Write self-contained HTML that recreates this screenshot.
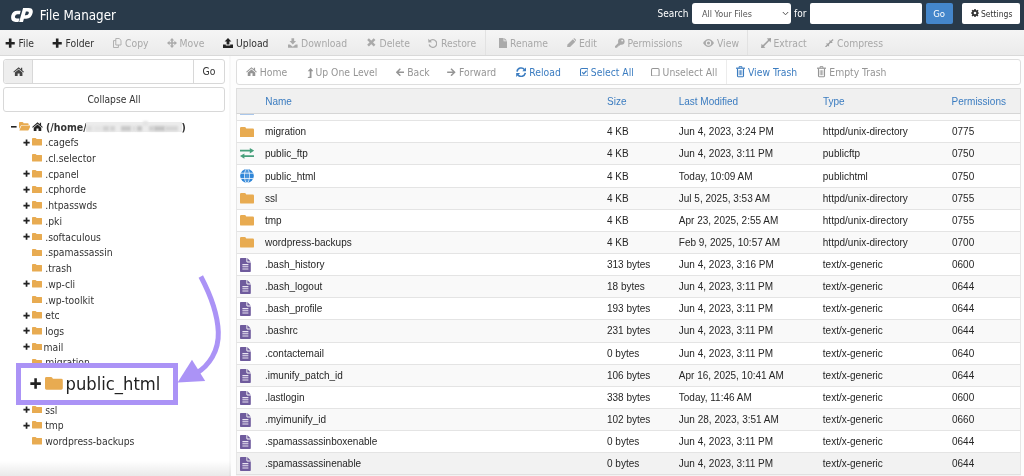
<!DOCTYPE html>
<html lang="en"><head><meta charset="utf-8"><title>File Manager</title>
<style>
*{box-sizing:border-box;margin:0;padding:0}
html,body{width:1024px;height:476px;overflow:hidden;background:#fff}
body{opacity:0.999}
body{position:relative;font-family:"DejaVu Sans Condensed","Liberation Sans",sans-serif;font-size:10.3px;color:#333}
.abs{position:absolute}
#hdr{left:0;top:0;width:1024px;height:30px;background:#293a4a}
#hdr .t{color:#fff;white-space:nowrap}
#tb{left:0;top:30px;width:1024px;height:25.6px;background:linear-gradient(#f5f5f5,#ebebeb);border-bottom:1px solid #d9d9d9}
.ti{position:absolute;top:0.8px;height:25px;line-height:25px;white-space:nowrap;font-size:10.3px;color:#333}
.ti.d{color:#a8a8a8}
.ti svg{position:absolute;top:0;margin-top:-1.2px}
.sep{position:absolute;top:0;width:1px;height:25px;background:#e2e2e2}
#left{left:0;top:56px;width:230px;height:420px;background:#fff}
#right{left:231px;top:56px;width:793px;height:420px;background:#fdfdfd}
.box{position:absolute;background:#fff;border:1px solid #d8d8d8;border-radius:3px}
.tr{position:absolute;left:0;height:16px;line-height:16px;white-space:nowrap;font-size:10.3px;color:#333}
.tr span{position:absolute;left:45.2px;top:0}
.tr svg{position:absolute}
.ai{position:absolute;top:0.4px;height:25px;line-height:25px;white-space:nowrap;font-size:10.3px;color:#959595}
.ai.b{color:#3b7cc0}
.ai svg{position:absolute;margin-top:-0.4px}
#th{left:235.5px;top:88px;width:785.5px;height:26px;background:#f0f0f0;border:1px solid #dedede;border-bottom:1px solid #d6d6d6}
#th span{position:absolute;top:0.6px;line-height:24px;font-family:"Liberation Sans",sans-serif;font-size:10px;color:#3b7cc0;white-space:nowrap}
.row{position:absolute;left:235.5px;width:785.5px;height:23px;border-top:1px solid #e4e4e4;border-left:1px solid #e6e6e6;border-right:1px solid #e6e6e6;background:#fff;font-family:"Liberation Sans",sans-serif;font-size:10px;color:#262626}
.row.o{background:#f9f9f9}
.row.l{background:#f2f2f2}
.row span{position:absolute;top:0.1px;line-height:22px;white-space:nowrap}
.row svg{position:absolute}
</style></head>
<body>
<div id="hdr" class="abs">
<svg style="left:10.9px;top:8.2px" width="22" height="14" viewBox="0 0 22 14" class="abs"><path d="M9.7 2.7H6.2Q1.5 2.7 0.3 7.6Q-0.8 13.9 4.6 13.9H7.5L8.5 10.4H5.7Q3.5 10.4 4 8.3Q4.5 6.2 6.5 6.2H8.8Z" fill="#fff"/><path d="M12.1 0H17.6Q22.7 0 21.6 5.1Q20.4 10.7 15.2 10.7H12.5L13.4 7.3H15Q17.3 7.3 17.8 5.2Q18.2 3.4 16.2 3.4H14.9L12 13.9H8.1Z" fill="#fff"/></svg>
<div class="abs t" style="left:39.8px;top:8.2px;line-height:16px;font-size:13.3px">File Manager</div>
<div class="abs t" style="left:657.5px;top:5.7px;line-height:16px;font-size:10px">Search</div>
<div class="abs" style="left:692px;top:3px;width:99px;height:21px;background:#fff;border-radius:3px"></div>
<div class="abs" style="left:702px;top:6px;line-height:16px;font-size:9px;color:#555;white-space:nowrap">All Your Files</div>
<svg style="left:782px;top:10.5px" width="7" height="5" viewBox="0 0 7 5" class="abs"><path d="M0.8 1L3.5 3.8L6.2 1" stroke="#555" stroke-width="1" fill="none"/></svg>
<div class="abs t" style="left:794px;top:5.7px;line-height:16px;font-size:10px">for</div>
<div class="abs" style="left:810px;top:3px;width:112px;height:21px;background:#fff;border-radius:2px"></div>
<div class="abs" style="left:925.6px;top:3px;width:27px;height:21.2px;background:#4486cb;border-radius:2px;color:#fff;font-size:9.5px;line-height:21px;text-align:center">Go</div>
<div class="abs" style="left:962.2px;top:3px;width:58.2px;height:21.2px;background:#fff;border-radius:2px"></div>
<svg style="left:970.5px;top:9.3px" width="8" height="8" viewBox="0 0 16 16" class="abs"><path d="M6.6 0H9.4L9.8 2.2L11.3 2.9L13.2 1.6L15 3.6L13.6 5.3L14.1 6.8L16 7.2V9.2L14.1 9.6L13.5 11L14.8 12.8L12.8 14.8L11 13.5L9.7 14L9.3 16H6.7L6.3 14L5 13.5L3.2 14.8L1.2 12.8L2.5 11L1.9 9.6L0 9.2V6.8L2 6.4L2.5 5.1L1.2 3.3L3.2 1.3L5 2.6L6.2 2.1Z" fill="#333"/><circle cx="8" cy="8" r="2.6" fill="#fff"/></svg>
<div class="abs" style="left:981px;top:5.5px;line-height:16px;font-size:8.5px;color:#333;white-space:nowrap">Settings</div>
</div>
<div id="tb" class="abs">
<div class="ti" style="left:0;width:0"><svg style="left:5px;top:8px" width="10.4" height="10.4" viewBox="0 0 10 10" ><path d="M5 0.6V9.4M0.6 5H9.4" stroke="#222" stroke-width="2.5" fill="none"/></svg><span style="position:absolute;left:18.5px;top:0">File</span></div>
<div class="ti" style="left:0;width:0"><svg style="left:52px;top:8px" width="10.4" height="10.4" viewBox="0 0 10 10" ><path d="M5 0.6V9.4M0.6 5H9.4" stroke="#222" stroke-width="2.5" fill="none"/></svg><span style="position:absolute;left:65.5px;top:0">Folder</span></div>
<div class="ti d" style="left:0;width:0"><svg style="left:113px;top:8px" width="8.5" height="10" viewBox="0 0 8.5 10" ><path d="M2.8 0.5H6.2L8 2.3V7H2.8Z" fill="none" stroke="#aaaaaa" stroke-width="0.9"/><path d="M2.8 2.6H0.5V9.5H5.4V7" fill="none" stroke="#aaaaaa" stroke-width="0.9"/></svg><span style="position:absolute;left:125px;top:0">Copy</span></div>
<div class="ti d" style="left:0;width:0"><svg style="left:166.5px;top:8px" width="10" height="10" viewBox="0 0 10 10" ><path d="M5 0L7.2 2.6H5.8V4.2H7.4V2.8L10 5L7.4 7.2V5.8H5.8V7.4H7.2L5 10L2.8 7.4H4.2V5.8H2.6V7.2L0 5L2.6 2.8V4.2H4.2V2.6H2.8Z" fill="#aaaaaa"/></svg><span style="position:absolute;left:179.5px;top:0">Move</span></div>
<div class="ti" style="left:0;width:0"><svg style="left:222.5px;top:8px" width="10" height="10" viewBox="0 0 10 10" ><path d="M5 0L8.4 3.6H6.4V6.6H3.6V3.6H1.6Z" fill="#222"/><path d="M0 6.6H2.8V7.6H7.2V6.6H10V10H0Z" fill="#222"/></svg><span style="position:absolute;left:236px;top:0">Upload</span></div>
<div class="ti d" style="left:0;width:0"><svg style="left:288px;top:8px" width="9.6" height="10" viewBox="0 0 10 10" ><path d="M3.6 0H6.4V3H8.4L5 6.6L1.6 3H3.6Z" fill="#aaaaaa"/><path d="M0 6.6H2L5 9L8 6.6H10V10H0Z" fill="#aaaaaa"/></svg><span style="position:absolute;left:301px;top:0">Download</span></div>
<div class="ti d" style="left:0;width:0"><svg style="left:367px;top:8.7px" width="8.6" height="8.6" viewBox="0 0 10 10" ><path d="M1.2 1.2L8.8 8.8M8.8 1.2L1.2 8.8" stroke="#aaaaaa" stroke-width="2.9" fill="none"/></svg><span style="position:absolute;left:379.5px;top:0">Delete</span></div>
<div class="ti d" style="left:0;width:0"><svg style="left:427.5px;top:8px" width="9.6" height="10" viewBox="0 0 10 10" ><path d="M1.9 3.1A4 4 0 1 1 1.2 6.6" stroke="#aaaaaa" stroke-width="1.3" fill="none"/><path d="M0.2 0.6L0.4 4.6L4.2 4.2Z" fill="#aaaaaa"/></svg><span style="position:absolute;left:441px;top:0">Restore</span></div>
<div class="sep" style="left:484.7px"></div>
<div class="ti d" style="left:0;width:0"><svg style="left:498.5px;top:8px" width="8" height="10" viewBox="0 0 8 10" ><path d="M0 0H4.6V3.2H8V10H0Z" fill="#aaaaaa"/><path d="M5.3 0L8 2.6H5.3Z" fill="#aaaaaa"/></svg><span style="position:absolute;left:510px;top:0">Rename</span></div>
<div class="ti d" style="left:0;width:0"><svg style="left:566.5px;top:8px" width="9.6" height="9.6" viewBox="0 0 10 10" ><path d="M0 10L0.5 6.9L6.1 1.3L8.7 3.9L3.1 9.5Z" fill="#aaaaaa"/><path d="M6.9 0.5Q7.5 -0.1 8.1 0.5L9.5 1.9Q10.1 2.5 9.5 3.1L9.3 3.3L6.7 0.7Z" fill="#aaaaaa"/></svg><span style="position:absolute;left:579px;top:0">Edit</span></div>
<div class="ti d" style="left:0;width:0"><svg style="left:615px;top:8px" width="9.6" height="10" viewBox="0 0 10 10" ><circle cx="6.6" cy="3.4" r="3.4" fill="#aaaaaa"/><path d="M4.4 4L0 8.4V10H2.4V8.9H3.5V7.8H4.6L6.4 6Z" fill="#aaaaaa"/><circle cx="7.5" cy="2.5" r="1" fill="#efefef"/></svg><span style="position:absolute;left:627.5px;top:0">Permissions</span></div>
<div class="ti d" style="left:0;width:0"><svg style="left:703px;top:9px" width="11" height="8" viewBox="0 0 11 8" ><path d="M0 4Q2.6 0 5.5 0Q8.4 0 11 4Q8.4 8 5.5 8Q2.6 8 0 4Z" fill="#aaaaaa"/><circle cx="5.5" cy="4" r="2.7" fill="#f0f0f0"/><circle cx="5.5" cy="4" r="1.6" fill="#aaaaaa"/></svg><span style="position:absolute;left:717px;top:0">View</span></div>
<div class="sep" style="left:747px"></div>
<div class="ti d" style="left:0;width:0"><svg style="left:761px;top:8.2px" width="10.2" height="10.2" viewBox="0 0 10 10" ><path d="M2 8L8 2" stroke="#a2a2a2" stroke-width="1.5" fill="none"/><path d="M10 0L5.7 0.5L9.5 4.3Z" fill="#a2a2a2"/><path d="M0 10L0.5 5.7L4.3 9.5Z" fill="#a2a2a2"/></svg><span style="position:absolute;left:773.5px;top:0">Extract</span></div>
<div class="ti d" style="left:0;width:0"><svg style="left:825px;top:9px" width="8.6" height="8.6" viewBox="0 0 10 10" ><path d="M0.6 9.4L9.4 0.6" stroke="#a2a2a2" stroke-width="1.5" fill="none"/><path d="M5.3 4.7V0.9L9.1 4.7Z" fill="#a2a2a2"/><path d="M4.7 5.3V9.1L0.9 5.3Z" fill="#a2a2a2"/></svg><span style="position:absolute;left:837px;top:0">Compress</span></div>
</div>
<div id="left" class="abs"></div>
<div class="abs" style="left:228.5px;top:56px;width:2.5px;height:420px;background:#f8f8f8"></div>
<div class="box" style="left:3px;top:59px;width:222px;height:25px"></div>
<div class="abs" style="left:4px;top:60px;width:28.5px;height:23px;background:#eee;border-right:1px solid #d8d8d8;border-radius:3px 0 0 3px"></div>
<svg style="left:12.9px;top:66.8px" width="11.3" height="9.2" viewBox="0 0 12 10" class="abs"><path d="M6 0.3L0.2 5.2L0.9 6L6 1.8L11.1 6L11.8 5.2L9.9 3.6V0.9H8.5V2.4Z" fill="#444"/><path d="M6 2.7L1.9 6.1V10H4.9V7H7.1V10H10.1V6.1Z" fill="#444"/></svg>
<div class="abs" style="left:193px;top:60px;width:1px;height:23px;background:#d8d8d8"></div>
<div class="abs" style="left:194px;top:60px;width:30px;height:23px;line-height:23.2px;text-align:center;font-size:10.3px;color:#333">Go</div>
<div class="box" style="left:3px;top:87.3px;width:222px;height:24.4px;line-height:24.2px;text-align:center;font-size:10.2px;color:#333">Collapse All</div>
<div class="tr" style="top:118.6px"><svg style="left:11.2px;top:7.4px" width="5.6" height="1.6" viewBox="0 0 5.6 1.6" ><rect width="5.6" height="1.6" fill="#222"/></svg><svg style="left:18.7px;top:3.6px" width="11.6" height="8.6" viewBox="0 0 14 10" preserveAspectRatio="none"><path d="M0 1Q0 0 1 0H4Q4.9 0 5.2 0.7L5.5 1.4H10.6Q11.6 1.4 11.6 2.4V3.4H3.6Q2.6 3.4 2.1 4.3L0 8.2Z" fill="#e8ab51"/><path d="M3.3 4.2H13.4Q14.3 4.2 13.8 5L11.6 9.3Q11.2 10 10.3 10H0.4L2.6 4.8Q2.8 4.2 3.3 4.2Z" fill="#e8ab51"/></svg><svg style="left:32.2px;top:3.0px" width="11" height="9.4" viewBox="0 0 12 10" preserveAspectRatio="none"><path d="M6 0.3L0.2 5.2L0.9 6L6 1.8L11.1 6L11.8 5.2L9.9 3.6V0.9H8.5V2.4Z" fill="#222"/><path d="M6 2.7L1.9 6.1V10H4.9V7H7.1V10H10.1V6.1Z" fill="#222"/></svg><span style="left:46px;font-weight:bold;font-size:10.5px">(/home/</span><span style="left:181.6px;font-weight:bold;font-size:10.5px">)</span></div>
<div class="abs" style="left:86px;top:121.5px;width:95.5px;height:10.2px;background:#ececec;filter:blur(0.7px)"></div>
<div class="abs" style="left:86.9px;top:125.6px;width:5.5px;height:5px;background:#dcdcdc;filter:blur(0.9px)"></div>
<div class="abs" style="left:93.9px;top:125.6px;width:7.8px;height:5px;background:#e4e4e4;filter:blur(0.9px)"></div>
<div class="abs" style="left:103.3px;top:125.6px;width:5.5px;height:5px;background:#d2d2d2;filter:blur(0.9px)"></div>
<div class="abs" style="left:110.3px;top:125.6px;width:4.7px;height:5px;background:#d4d4d4;filter:blur(0.9px)"></div>
<div class="abs" style="left:120.5px;top:125.6px;width:10.2px;height:5px;background:#c9c9c9;filter:blur(0.9px)"></div>
<div class="abs" style="left:132.2px;top:125.6px;width:3.4px;height:5px;background:#dedede;filter:blur(0.9px)"></div>
<div class="abs" style="left:136.9px;top:125.6px;width:4.7px;height:5px;background:#c6c6c6;filter:blur(0.9px)"></div>
<div class="abs" style="left:149.4px;top:125.6px;width:4.7px;height:5px;background:#d2d2d2;filter:blur(0.9px)"></div>
<div class="abs" style="left:154.1px;top:125.6px;width:10.9px;height:5px;background:#c4c4c4;filter:blur(0.9px)"></div>
<div class="abs" style="left:165.0px;top:125.6px;width:12.5px;height:5px;background:#d6d6d6;filter:blur(0.9px)"></div>
<div class="abs" style="left:143.1px;top:120.8px;width:4.6px;height:5px;background:#e4e4e4;filter:blur(0.8px)"></div>
<div class="tr" style="top:134.30px"><svg style="left:22.9px;top:4.5px" width="7.1" height="7.1" viewBox="0 0 10 10" ><path d="M5 0.6V9.4M0.6 5H9.4" stroke="#222" stroke-width="2.4" fill="none"/></svg><svg style="left:32px;top:4.2px" width="10.2" height="7.6" viewBox="0 0 14 10.5" preserveAspectRatio="none"><path d="M0 1.2Q0 0 1.2 0H4.6Q5.6 0 5.9 0.8L6.2 1.5H12.8Q14 1.5 14 2.7V9.3Q14 10.5 12.8 10.5H1.2Q0 10.5 0 9.3Z" fill="#e8ab51"/></svg><span>.cagefs</span></div>
<div class="tr" style="top:150.02px"><svg style="left:32px;top:4.2px" width="10.2" height="7.6" viewBox="0 0 14 10.5" preserveAspectRatio="none"><path d="M0 1.2Q0 0 1.2 0H4.6Q5.6 0 5.9 0.8L6.2 1.5H12.8Q14 1.5 14 2.7V9.3Q14 10.5 12.8 10.5H1.2Q0 10.5 0 9.3Z" fill="#e8ab51"/></svg><span>.cl.selector</span></div>
<div class="tr" style="top:165.74px"><svg style="left:22.9px;top:4.5px" width="7.1" height="7.1" viewBox="0 0 10 10" ><path d="M5 0.6V9.4M0.6 5H9.4" stroke="#222" stroke-width="2.4" fill="none"/></svg><svg style="left:32px;top:4.2px" width="10.2" height="7.6" viewBox="0 0 14 10.5" preserveAspectRatio="none"><path d="M0 1.2Q0 0 1.2 0H4.6Q5.6 0 5.9 0.8L6.2 1.5H12.8Q14 1.5 14 2.7V9.3Q14 10.5 12.8 10.5H1.2Q0 10.5 0 9.3Z" fill="#e8ab51"/></svg><span>.cpanel</span></div>
<div class="tr" style="top:181.46px"><svg style="left:22.9px;top:4.5px" width="7.1" height="7.1" viewBox="0 0 10 10" ><path d="M5 0.6V9.4M0.6 5H9.4" stroke="#222" stroke-width="2.4" fill="none"/></svg><svg style="left:32px;top:4.2px" width="10.2" height="7.6" viewBox="0 0 14 10.5" preserveAspectRatio="none"><path d="M0 1.2Q0 0 1.2 0H4.6Q5.6 0 5.9 0.8L6.2 1.5H12.8Q14 1.5 14 2.7V9.3Q14 10.5 12.8 10.5H1.2Q0 10.5 0 9.3Z" fill="#e8ab51"/></svg><span>.cphorde</span></div>
<div class="tr" style="top:197.18px"><svg style="left:22.9px;top:4.5px" width="7.1" height="7.1" viewBox="0 0 10 10" ><path d="M5 0.6V9.4M0.6 5H9.4" stroke="#222" stroke-width="2.4" fill="none"/></svg><svg style="left:32px;top:4.2px" width="10.2" height="7.6" viewBox="0 0 14 10.5" preserveAspectRatio="none"><path d="M0 1.2Q0 0 1.2 0H4.6Q5.6 0 5.9 0.8L6.2 1.5H12.8Q14 1.5 14 2.7V9.3Q14 10.5 12.8 10.5H1.2Q0 10.5 0 9.3Z" fill="#e8ab51"/></svg><span>.htpasswds</span></div>
<div class="tr" style="top:212.90px"><svg style="left:22.9px;top:4.5px" width="7.1" height="7.1" viewBox="0 0 10 10" ><path d="M5 0.6V9.4M0.6 5H9.4" stroke="#222" stroke-width="2.4" fill="none"/></svg><svg style="left:32px;top:4.2px" width="10.2" height="7.6" viewBox="0 0 14 10.5" preserveAspectRatio="none"><path d="M0 1.2Q0 0 1.2 0H4.6Q5.6 0 5.9 0.8L6.2 1.5H12.8Q14 1.5 14 2.7V9.3Q14 10.5 12.8 10.5H1.2Q0 10.5 0 9.3Z" fill="#e8ab51"/></svg><span>.pki</span></div>
<div class="tr" style="top:228.62px"><svg style="left:22.9px;top:4.5px" width="7.1" height="7.1" viewBox="0 0 10 10" ><path d="M5 0.6V9.4M0.6 5H9.4" stroke="#222" stroke-width="2.4" fill="none"/></svg><svg style="left:32px;top:4.2px" width="10.2" height="7.6" viewBox="0 0 14 10.5" preserveAspectRatio="none"><path d="M0 1.2Q0 0 1.2 0H4.6Q5.6 0 5.9 0.8L6.2 1.5H12.8Q14 1.5 14 2.7V9.3Q14 10.5 12.8 10.5H1.2Q0 10.5 0 9.3Z" fill="#e8ab51"/></svg><span>.softaculous</span></div>
<div class="tr" style="top:244.34px"><svg style="left:32px;top:4.2px" width="10.2" height="7.6" viewBox="0 0 14 10.5" preserveAspectRatio="none"><path d="M0 1.2Q0 0 1.2 0H4.6Q5.6 0 5.9 0.8L6.2 1.5H12.8Q14 1.5 14 2.7V9.3Q14 10.5 12.8 10.5H1.2Q0 10.5 0 9.3Z" fill="#e8ab51"/></svg><span>.spamassassin</span></div>
<div class="tr" style="top:260.06px"><svg style="left:32px;top:4.2px" width="10.2" height="7.6" viewBox="0 0 14 10.5" preserveAspectRatio="none"><path d="M0 1.2Q0 0 1.2 0H4.6Q5.6 0 5.9 0.8L6.2 1.5H12.8Q14 1.5 14 2.7V9.3Q14 10.5 12.8 10.5H1.2Q0 10.5 0 9.3Z" fill="#e8ab51"/></svg><span>.trash</span></div>
<div class="tr" style="top:275.78px"><svg style="left:22.9px;top:4.5px" width="7.1" height="7.1" viewBox="0 0 10 10" ><path d="M5 0.6V9.4M0.6 5H9.4" stroke="#222" stroke-width="2.4" fill="none"/></svg><svg style="left:32px;top:4.2px" width="10.2" height="7.6" viewBox="0 0 14 10.5" preserveAspectRatio="none"><path d="M0 1.2Q0 0 1.2 0H4.6Q5.6 0 5.9 0.8L6.2 1.5H12.8Q14 1.5 14 2.7V9.3Q14 10.5 12.8 10.5H1.2Q0 10.5 0 9.3Z" fill="#e8ab51"/></svg><span>.wp-cli</span></div>
<div class="tr" style="top:291.50px"><svg style="left:32px;top:4.2px" width="10.2" height="7.6" viewBox="0 0 14 10.5" preserveAspectRatio="none"><path d="M0 1.2Q0 0 1.2 0H4.6Q5.6 0 5.9 0.8L6.2 1.5H12.8Q14 1.5 14 2.7V9.3Q14 10.5 12.8 10.5H1.2Q0 10.5 0 9.3Z" fill="#e8ab51"/></svg><span>.wp-toolkit</span></div>
<div class="tr" style="top:307.22px"><svg style="left:22.9px;top:4.5px" width="7.1" height="7.1" viewBox="0 0 10 10" ><path d="M5 0.6V9.4M0.6 5H9.4" stroke="#222" stroke-width="2.4" fill="none"/></svg><svg style="left:32px;top:4.2px" width="10.2" height="7.6" viewBox="0 0 14 10.5" preserveAspectRatio="none"><path d="M0 1.2Q0 0 1.2 0H4.6Q5.6 0 5.9 0.8L6.2 1.5H12.8Q14 1.5 14 2.7V9.3Q14 10.5 12.8 10.5H1.2Q0 10.5 0 9.3Z" fill="#e8ab51"/></svg><span>etc</span></div>
<div class="tr" style="top:322.94px"><svg style="left:22.9px;top:4.5px" width="7.1" height="7.1" viewBox="0 0 10 10" ><path d="M5 0.6V9.4M0.6 5H9.4" stroke="#222" stroke-width="2.4" fill="none"/></svg><svg style="left:32px;top:4.2px" width="10.2" height="7.6" viewBox="0 0 14 10.5" preserveAspectRatio="none"><path d="M0 1.2Q0 0 1.2 0H4.6Q5.6 0 5.9 0.8L6.2 1.5H12.8Q14 1.5 14 2.7V9.3Q14 10.5 12.8 10.5H1.2Q0 10.5 0 9.3Z" fill="#e8ab51"/></svg><span>logs</span></div>
<div class="tr" style="top:338.66px"><svg style="left:22.9px;top:4.5px" width="7.1" height="7.1" viewBox="0 0 10 10" ><path d="M5 0.6V9.4M0.6 5H9.4" stroke="#222" stroke-width="2.4" fill="none"/></svg><svg style="left:32px;top:4.2px" width="10.2" height="7.6" viewBox="0 0 14 10.5" preserveAspectRatio="none"><path d="M0 1.2Q0 0 1.2 0H4.6Q5.6 0 5.9 0.8L6.2 1.5H12.8Q14 1.5 14 2.7V9.3Q14 10.5 12.8 10.5H1.2Q0 10.5 0 9.3Z" fill="#e8ab51"/></svg><span style="left:43.6px">mail</span></div>
<div class="tr" style="top:354.38px"><svg style="left:32px;top:4.2px" width="10.2" height="7.6" viewBox="0 0 14 10.5" preserveAspectRatio="none"><path d="M0 1.2Q0 0 1.2 0H4.6Q5.6 0 5.9 0.8L6.2 1.5H12.8Q14 1.5 14 2.7V9.3Q14 10.5 12.8 10.5H1.2Q0 10.5 0 9.3Z" fill="#e8ab51"/></svg><span>migration</span></div>
<div class="tr" style="top:370.10px"><svg style="left:32px;top:4.2px" width="10.2" height="7.6" viewBox="0 0 14 10.5" preserveAspectRatio="none"><path d="M0 1.2Q0 0 1.2 0H4.6Q5.6 0 5.9 0.8L6.2 1.5H12.8Q14 1.5 14 2.7V9.3Q14 10.5 12.8 10.5H1.2Q0 10.5 0 9.3Z" fill="#e8ab51"/></svg><span>public_ftp</span></div>
<div class="tr" style="top:385.82px"><svg style="left:22.9px;top:4.5px" width="7.1" height="7.1" viewBox="0 0 10 10" ><path d="M5 0.6V9.4M0.6 5H9.4" stroke="#222" stroke-width="2.4" fill="none"/></svg><svg style="left:32px;top:4.2px" width="10.2" height="7.6" viewBox="0 0 14 10.5" preserveAspectRatio="none"><path d="M0 1.2Q0 0 1.2 0H4.6Q5.6 0 5.9 0.8L6.2 1.5H12.8Q14 1.5 14 2.7V9.3Q14 10.5 12.8 10.5H1.2Q0 10.5 0 9.3Z" fill="#e8ab51"/></svg><span>public_html</span></div>
<div class="tr" style="top:401.54px"><svg style="left:22.9px;top:4.5px" width="7.1" height="7.1" viewBox="0 0 10 10" ><path d="M5 0.6V9.4M0.6 5H9.4" stroke="#222" stroke-width="2.4" fill="none"/></svg><svg style="left:32px;top:4.2px" width="10.2" height="7.6" viewBox="0 0 14 10.5" preserveAspectRatio="none"><path d="M0 1.2Q0 0 1.2 0H4.6Q5.6 0 5.9 0.8L6.2 1.5H12.8Q14 1.5 14 2.7V9.3Q14 10.5 12.8 10.5H1.2Q0 10.5 0 9.3Z" fill="#e8ab51"/></svg><span>ssl</span></div>
<div class="tr" style="top:417.26px"><svg style="left:22.9px;top:4.5px" width="7.1" height="7.1" viewBox="0 0 10 10" ><path d="M5 0.6V9.4M0.6 5H9.4" stroke="#222" stroke-width="2.4" fill="none"/></svg><svg style="left:32px;top:4.2px" width="10.2" height="7.6" viewBox="0 0 14 10.5" preserveAspectRatio="none"><path d="M0 1.2Q0 0 1.2 0H4.6Q5.6 0 5.9 0.8L6.2 1.5H12.8Q14 1.5 14 2.7V9.3Q14 10.5 12.8 10.5H1.2Q0 10.5 0 9.3Z" fill="#e8ab51"/></svg><span>tmp</span></div>
<div class="tr" style="top:432.98px"><svg style="left:32px;top:4.2px" width="10.2" height="7.6" viewBox="0 0 14 10.5" preserveAspectRatio="none"><path d="M0 1.2Q0 0 1.2 0H4.6Q5.6 0 5.9 0.8L6.2 1.5H12.8Q14 1.5 14 2.7V9.3Q14 10.5 12.8 10.5H1.2Q0 10.5 0 9.3Z" fill="#e8ab51"/></svg><span>wordpress-backups</span></div>
<div id="right" class="abs"></div>
<div class="box" style="left:235.5px;top:58.5px;width:785.5px;height:26.5px;border-color:#dedede">
<div class="ai" style="left:0;width:0"><svg style="left:9.5px;top:7.5px" width="11" height="9" viewBox="0 0 12 10" preserveAspectRatio="none"><path d="M6 0.3L0.2 5.2L0.9 6L6 1.8L11.1 6L11.8 5.2L9.9 3.6V0.9H8.5V2.4Z" fill="#959595"/><path d="M6 2.7L1.9 6.1V10H4.9V7H7.1V10H10.1V6.1Z" fill="#959595"/></svg><span style="position:absolute;left:23.30000000000001px;top:0px">Home</span></div>
<div class="ai" style="left:0;width:0"><svg style="left:70.19999999999999px;top:8px" width="6.2" height="10" viewBox="0 0 6 10" ><path d="M3.5 0L6.4 3.3H4.4V10H0.4L1.5 8.7H2.6V3.3H0.6Z" fill="#959595"/></svg><span style="position:absolute;left:79.0px;top:0px">Up One Level</span></div>
<div class="ai" style="left:0;width:0"><svg style="left:159.5px;top:8.4px" width="8.4" height="8.4" viewBox="0 0 10 10" ><path d="M9.8 5H1.6M5.2 0.8L1 5L5.2 9.2" stroke="#959595" stroke-width="1.8" fill="none"/></svg><span style="position:absolute;left:170.7px;top:0px">Back</span></div>
<div class="ai" style="left:0;width:0"><svg style="left:210.89999999999998px;top:8.4px" width="8.4" height="8.4" viewBox="0 0 10 10" ><path d="M0.2 5H8.4M4.8 0.8L9 5L4.8 9.2" stroke="#959595" stroke-width="1.8" fill="none"/></svg><span style="position:absolute;left:222.5px;top:0px">Forward</span></div>
<div class="ai b" style="left:0;width:0"><svg style="left:279.5px;top:7px" width="10.4" height="10.4" viewBox="0 0 10 10" ><path d="M1 4.4A4 4 0 0 1 8.2 2.6" stroke="#3b7cc0" stroke-width="1.5" fill="none"/><path d="M9.8 0.4V4.2H6Z" fill="#3b7cc0"/><path d="M9 5.6A4 4 0 0 1 1.8 7.4" stroke="#3b7cc0" stroke-width="1.5" fill="none"/><path d="M0.2 9.6V5.8H4Z" fill="#3b7cc0"/></svg><span style="position:absolute;left:292.79999999999995px;top:0px">Reload</span></div>
<div class="ai b" style="left:0;width:0"><svg style="left:343.20000000000005px;top:8.3px" width="8.6" height="8.6" viewBox="0 0 10 10" ><rect x="0.6" y="0.6" width="8.8" height="8.8" rx="1.4" fill="none" stroke="#3b7cc0" stroke-width="1.2"/><path d="M2.6 5L4.4 6.8L7.6 3.2" stroke="#3b7cc0" stroke-width="1.4" fill="none"/></svg><span style="position:absolute;left:354.29999999999995px;top:0px">Select All</span></div>
<div class="ai" style="left:0;width:0"><svg style="left:414.5px;top:8.3px" width="8.6" height="8.6" viewBox="0 0 10 10" ><rect x="0.6" y="0.6" width="8.8" height="8.8" rx="1.4" fill="none" stroke="#959595" stroke-width="1.2"/></svg><span style="position:absolute;left:426.1px;top:0px">Unselect All</span></div>
<div class="abs" style="left:489px;top:0;width:1px;height:24px;background:#ececec"></div>
<div class="ai b" style="left:0;width:0"><svg style="left:499.90000000000003px;top:6.9px" width="9" height="11.2" viewBox="0 0 9 11.2" ><path d="M0 2.2H9" stroke="#3b7cc0" stroke-width="1.2" fill="none"/><path d="M3.1 2V0.6H5.9V2" stroke="#3b7cc0" stroke-width="0.9" fill="none"/><path d="M1.5 2.6V10.1Q1.5 10.7 2.1 10.7H6.9Q7.5 10.7 7.5 10.1V2.6" stroke="#3b7cc0" stroke-width="1.1" fill="none"/><path d="M3.2 4.2V9.2M4.5 4.2V9.2M5.8 4.2V9.2" stroke="#3b7cc0" stroke-width="0.75" fill="none"/></svg><span style="position:absolute;left:511.5px;top:0px">View Trash</span></div>
<div class="ai" style="left:0;width:0"><svg style="left:580.8px;top:6.9px" width="9" height="11.2" viewBox="0 0 9 11.2" ><path d="M0 2.2H9" stroke="#959595" stroke-width="1.2" fill="none"/><path d="M3.1 2V0.6H5.9V2" stroke="#959595" stroke-width="0.9" fill="none"/><path d="M1.5 2.6V10.1Q1.5 10.7 2.1 10.7H6.9Q7.5 10.7 7.5 10.1V2.6" stroke="#959595" stroke-width="1.1" fill="none"/><path d="M3.2 4.2V9.2M4.5 4.2V9.2M5.8 4.2V9.2" stroke="#959595" stroke-width="0.75" fill="none"/></svg><span style="position:absolute;left:592.8px;top:0px">Empty Trash</span></div>
</div>
<div id="th" class="abs"><span style="left:28.7px">Name</span><span style="left:370.5px">Size</span><span style="left:442.2px">Last Modified</span><span style="left:586.5px">Type</span><span style="left:715px">Permissions</span></div>
<div class="abs" style="left:236px;top:114px;width:785px;height:6px;background:#fcfcfc;border-left:1px solid #e4e4e4;border-right:1px solid #e4e4e4"></div>
<div class="abs" style="left:240px;top:114px;width:14px;height:1px;background:#a9c6ea"></div>
<div class="row" style="top:120.20px"><svg style="left:3.5px;top:5.6px" width="14" height="10.6" viewBox="0 0 14 10.5" preserveAspectRatio="none"><path d="M0 1.2Q0 0 1.2 0H4.6Q5.6 0 5.9 0.8L6.2 1.5H12.8Q14 1.5 14 2.7V9.3Q14 10.5 12.8 10.5H1.2Q0 10.5 0 9.3Z" fill="#e8ab51"/></svg><span style="left:28.5px">migration</span><span style="left:370.5px">4 KB</span><span style="left:442.3px">Jun 4, 2023, 3:24 PM</span><span style="left:586.3px">httpd/unix-directory</span><span style="left:715.5px">0775</span></div>
<div class="row o" style="top:142.33px"><svg style="left:3.5px;top:5.0px" width="14.2" height="10.8" viewBox="0 0 14.2 10.8" ><path d="M0 1.8H9.8V0L14.2 2.7L9.8 5.4V3.6H0Z" fill="#47a07c"/><path d="M14.2 7.2H4.4V5.4L0 8.1L4.4 10.8V9H14.2Z" fill="#47a07c"/></svg><span style="left:28.5px">public_ftp</span><span style="left:370.5px">4 KB</span><span style="left:442.3px">Jun 4, 2023, 3:11 PM</span><span style="left:586.3px">publicftp</span><span style="left:715.5px">0750</span></div>
<div class="row" style="top:164.46px"><svg style="left:3.5px;top:3.7px" width="14" height="13.7" viewBox="0 0 14 14" ><circle cx="7" cy="7" r="7" fill="#2f86d8"/><path d="M0.4 4.3H13.6M0.4 9.7H13.6" stroke="#fff" stroke-width="0.8" fill="none"/><ellipse cx="7" cy="7" rx="2.5" ry="7.4" stroke="#fff" stroke-width="0.8" fill="none"/><path d="M7 0V14" stroke="#fff" stroke-width="0.5" opacity="0.6" fill="none"/></svg><span style="left:28.5px">public_html</span><span style="left:370.5px">4 KB</span><span style="left:442.3px">Today, 10:09 AM</span><span style="left:586.3px">publichtml</span><span style="left:715.5px">0750</span></div>
<div class="row o" style="top:186.59px"><svg style="left:3.5px;top:5.6px" width="14" height="10.6" viewBox="0 0 14 10.5" preserveAspectRatio="none"><path d="M0 1.2Q0 0 1.2 0H4.6Q5.6 0 5.9 0.8L6.2 1.5H12.8Q14 1.5 14 2.7V9.3Q14 10.5 12.8 10.5H1.2Q0 10.5 0 9.3Z" fill="#e8ab51"/></svg><span style="left:28.5px">ssl</span><span style="left:370.5px">4 KB</span><span style="left:442.3px">Jul 5, 2025, 3:53 AM</span><span style="left:586.3px">httpd/unix-directory</span><span style="left:715.5px">0755</span></div>
<div class="row" style="top:208.72px"><svg style="left:3.5px;top:5.6px" width="14" height="10.6" viewBox="0 0 14 10.5" preserveAspectRatio="none"><path d="M0 1.2Q0 0 1.2 0H4.6Q5.6 0 5.9 0.8L6.2 1.5H12.8Q14 1.5 14 2.7V9.3Q14 10.5 12.8 10.5H1.2Q0 10.5 0 9.3Z" fill="#e8ab51"/></svg><span style="left:28.5px">tmp</span><span style="left:370.5px">4 KB</span><span style="left:442.3px">Apr 23, 2025, 2:55 AM</span><span style="left:586.3px">httpd/unix-directory</span><span style="left:715.5px">0755</span></div>
<div class="row o" style="top:230.85px"><svg style="left:3.5px;top:5.6px" width="14" height="10.6" viewBox="0 0 14 10.5" preserveAspectRatio="none"><path d="M0 1.2Q0 0 1.2 0H4.6Q5.6 0 5.9 0.8L6.2 1.5H12.8Q14 1.5 14 2.7V9.3Q14 10.5 12.8 10.5H1.2Q0 10.5 0 9.3Z" fill="#e8ab51"/></svg><span style="left:28.5px">wordpress-backups</span><span style="left:370.5px">4 KB</span><span style="left:442.3px">Feb 9, 2025, 10:57 AM</span><span style="left:586.3px">httpd/unix-directory</span><span style="left:715.5px">0700</span></div>
<div class="row" style="top:252.98px"><svg style="left:3.5px;top:4.2px" width="10.8" height="14" viewBox="0 0 10.8 14" ><path d="M0.8 0H6.4V3.6Q6.4 4.4 7.2 4.4H10.8V13.2Q10.8 14 10 14H0.8Q0 14 0 13.2V0.8Q0 0 0.8 0Z" fill="#6f5b9d"/><path d="M7.3 0.1L10.7 3.5H7.3Z" fill="#6f5b9d"/><path d="M2.4 6.6H8.4M2.4 8.8H8.4M2.4 11H8.4" stroke="#e9e4f2" stroke-width="1.1"/></svg><span style="left:28.5px">.bash_history</span><span style="left:370.5px">313 bytes</span><span style="left:442.3px">Jun 4, 2023, 3:16 PM</span><span style="left:586.3px">text/x-generic</span><span style="left:715.5px">0600</span></div>
<div class="row o" style="top:275.11px"><svg style="left:3.5px;top:4.2px" width="10.8" height="14" viewBox="0 0 10.8 14" ><path d="M0.8 0H6.4V3.6Q6.4 4.4 7.2 4.4H10.8V13.2Q10.8 14 10 14H0.8Q0 14 0 13.2V0.8Q0 0 0.8 0Z" fill="#6f5b9d"/><path d="M7.3 0.1L10.7 3.5H7.3Z" fill="#6f5b9d"/><path d="M2.4 6.6H8.4M2.4 8.8H8.4M2.4 11H8.4" stroke="#e9e4f2" stroke-width="1.1"/></svg><span style="left:28.5px">.bash_logout</span><span style="left:370.5px">18 bytes</span><span style="left:442.3px">Jun 4, 2023, 3:11 PM</span><span style="left:586.3px">text/x-generic</span><span style="left:715.5px">0644</span></div>
<div class="row" style="top:297.24px"><svg style="left:3.5px;top:4.2px" width="10.8" height="14" viewBox="0 0 10.8 14" ><path d="M0.8 0H6.4V3.6Q6.4 4.4 7.2 4.4H10.8V13.2Q10.8 14 10 14H0.8Q0 14 0 13.2V0.8Q0 0 0.8 0Z" fill="#6f5b9d"/><path d="M7.3 0.1L10.7 3.5H7.3Z" fill="#6f5b9d"/><path d="M2.4 6.6H8.4M2.4 8.8H8.4M2.4 11H8.4" stroke="#e9e4f2" stroke-width="1.1"/></svg><span style="left:28.5px">.bash_profile</span><span style="left:370.5px">193 bytes</span><span style="left:442.3px">Jun 4, 2023, 3:11 PM</span><span style="left:586.3px">text/x-generic</span><span style="left:715.5px">0644</span></div>
<div class="row o" style="top:319.37px"><svg style="left:3.5px;top:4.2px" width="10.8" height="14" viewBox="0 0 10.8 14" ><path d="M0.8 0H6.4V3.6Q6.4 4.4 7.2 4.4H10.8V13.2Q10.8 14 10 14H0.8Q0 14 0 13.2V0.8Q0 0 0.8 0Z" fill="#6f5b9d"/><path d="M7.3 0.1L10.7 3.5H7.3Z" fill="#6f5b9d"/><path d="M2.4 6.6H8.4M2.4 8.8H8.4M2.4 11H8.4" stroke="#e9e4f2" stroke-width="1.1"/></svg><span style="left:28.5px">.bashrc</span><span style="left:370.5px">231 bytes</span><span style="left:442.3px">Jun 4, 2023, 3:11 PM</span><span style="left:586.3px">text/x-generic</span><span style="left:715.5px">0644</span></div>
<div class="row" style="top:341.50px"><svg style="left:3.5px;top:4.2px" width="10.8" height="14" viewBox="0 0 10.8 14" ><path d="M0.8 0H6.4V3.6Q6.4 4.4 7.2 4.4H10.8V13.2Q10.8 14 10 14H0.8Q0 14 0 13.2V0.8Q0 0 0.8 0Z" fill="#6f5b9d"/><path d="M7.3 0.1L10.7 3.5H7.3Z" fill="#6f5b9d"/><path d="M2.4 6.6H8.4M2.4 8.8H8.4M2.4 11H8.4" stroke="#e9e4f2" stroke-width="1.1"/></svg><span style="left:28.5px">.contactemail</span><span style="left:370.5px">0 bytes</span><span style="left:442.3px">Jun 4, 2023, 3:11 PM</span><span style="left:586.3px">text/x-generic</span><span style="left:715.5px">0640</span></div>
<div class="row o" style="top:363.63px"><svg style="left:3.5px;top:4.2px" width="10.8" height="14" viewBox="0 0 10.8 14" ><path d="M0.8 0H6.4V3.6Q6.4 4.4 7.2 4.4H10.8V13.2Q10.8 14 10 14H0.8Q0 14 0 13.2V0.8Q0 0 0.8 0Z" fill="#6f5b9d"/><path d="M7.3 0.1L10.7 3.5H7.3Z" fill="#6f5b9d"/><path d="M2.4 6.6H8.4M2.4 8.8H8.4M2.4 11H8.4" stroke="#e9e4f2" stroke-width="1.1"/></svg><span style="left:28.5px">.imunify_patch_id</span><span style="left:370.5px">106 bytes</span><span style="left:442.3px">Apr 16, 2025, 10:41 AM</span><span style="left:586.3px">text/x-generic</span><span style="left:715.5px">0644</span></div>
<div class="row" style="top:385.76px"><svg style="left:3.5px;top:4.2px" width="10.8" height="14" viewBox="0 0 10.8 14" ><path d="M0.8 0H6.4V3.6Q6.4 4.4 7.2 4.4H10.8V13.2Q10.8 14 10 14H0.8Q0 14 0 13.2V0.8Q0 0 0.8 0Z" fill="#6f5b9d"/><path d="M7.3 0.1L10.7 3.5H7.3Z" fill="#6f5b9d"/><path d="M2.4 6.6H8.4M2.4 8.8H8.4M2.4 11H8.4" stroke="#e9e4f2" stroke-width="1.1"/></svg><span style="left:28.5px">.lastlogin</span><span style="left:370.5px">338 bytes</span><span style="left:442.3px">Today, 11:46 AM</span><span style="left:586.3px">text/x-generic</span><span style="left:715.5px">0600</span></div>
<div class="row o" style="top:407.89px"><svg style="left:3.5px;top:4.2px" width="10.8" height="14" viewBox="0 0 10.8 14" ><path d="M0.8 0H6.4V3.6Q6.4 4.4 7.2 4.4H10.8V13.2Q10.8 14 10 14H0.8Q0 14 0 13.2V0.8Q0 0 0.8 0Z" fill="#6f5b9d"/><path d="M7.3 0.1L10.7 3.5H7.3Z" fill="#6f5b9d"/><path d="M2.4 6.6H8.4M2.4 8.8H8.4M2.4 11H8.4" stroke="#e9e4f2" stroke-width="1.1"/></svg><span style="left:28.5px">.myimunify_id</span><span style="left:370.5px">102 bytes</span><span style="left:442.3px">Jun 28, 2023, 3:51 AM</span><span style="left:586.3px">text/x-generic</span><span style="left:715.5px">0660</span></div>
<div class="row" style="top:430.02px"><svg style="left:3.5px;top:4.2px" width="10.8" height="14" viewBox="0 0 10.8 14" ><path d="M0.8 0H6.4V3.6Q6.4 4.4 7.2 4.4H10.8V13.2Q10.8 14 10 14H0.8Q0 14 0 13.2V0.8Q0 0 0.8 0Z" fill="#6f5b9d"/><path d="M7.3 0.1L10.7 3.5H7.3Z" fill="#6f5b9d"/><path d="M2.4 6.6H8.4M2.4 8.8H8.4M2.4 11H8.4" stroke="#e9e4f2" stroke-width="1.1"/></svg><span style="left:28.5px">.spamassassinboxenable</span><span style="left:370.5px">0 bytes</span><span style="left:442.3px">Jun 4, 2023, 3:11 PM</span><span style="left:586.3px">text/x-generic</span><span style="left:715.5px">0644</span></div>
<div class="row o l" style="top:452.15px"><svg style="left:3.5px;top:4.2px" width="10.8" height="14" viewBox="0 0 10.8 14" ><path d="M0.8 0H6.4V3.6Q6.4 4.4 7.2 4.4H10.8V13.2Q10.8 14 10 14H0.8Q0 14 0 13.2V0.8Q0 0 0.8 0Z" fill="#6f5b9d"/><path d="M7.3 0.1L10.7 3.5H7.3Z" fill="#6f5b9d"/><path d="M2.4 6.6H8.4M2.4 8.8H8.4M2.4 11H8.4" stroke="#e9e4f2" stroke-width="1.1"/></svg><span style="left:28.5px">.spamassassinenable</span><span style="left:370.5px">0 bytes</span><span style="left:442.3px">Jun 4, 2023, 3:11 PM</span><span style="left:586.3px">text/x-generic</span><span style="left:715.5px">0644</span></div>
<div class="abs" style="left:236px;top:474.28px;width:785px;height:3px;border-top:1px solid #e0e0e0;background:#f3f3f3"></div>
<div class="abs" style="left:0;top:461px;width:231px;height:15px;background:linear-gradient(to bottom,rgba(0,0,0,0),rgba(0,0,0,0.085))"></div>
<div class="abs" style="left:15.8px;top:362.9px;width:162.2px;height:42.1px;background:#fff;border:5.3px solid #ab93f6"></div>
<svg style="left:30.3px;top:378px" width="11.2" height="11.2" viewBox="0 0 10 10" class="abs"><path d="M5 0.3V9.7M0.3 5H9.7" stroke="#222" stroke-width="2.3" fill="none"/></svg>
<svg class="abs" style="left:45.3px;top:377.3px" width="17.8" height="12.8" viewBox="0 0 14 10.5" preserveAspectRatio="none"><path d="M0 1.2Q0 0 1.2 0H4.6Q5.6 0 5.9 0.8L6.2 1.5H12.8Q14 1.5 14 2.7V9.3Q14 10.5 12.8 10.5H1.2Q0 10.5 0 9.3Z" fill="#e8ab51"/></svg>
<div class="abs" style="left:65.6px;top:372px;line-height:24px;font-size:18.2px;color:#222;white-space:nowrap">public_html</div>
<svg class="abs" style="left:0;top:0" width="1024" height="476" viewBox="0 0 1024 476"><path d="M200.8 276.5C209 292 217.5 312 218.3 332C219 351 209 366 196 373.5" stroke="#ab93f6" stroke-width="5" fill="none" stroke-linecap="butt"/><path d="M177.6 382.4L192 359.8L205.2 381Z" fill="#ab93f6"/></svg>
</body></html>
